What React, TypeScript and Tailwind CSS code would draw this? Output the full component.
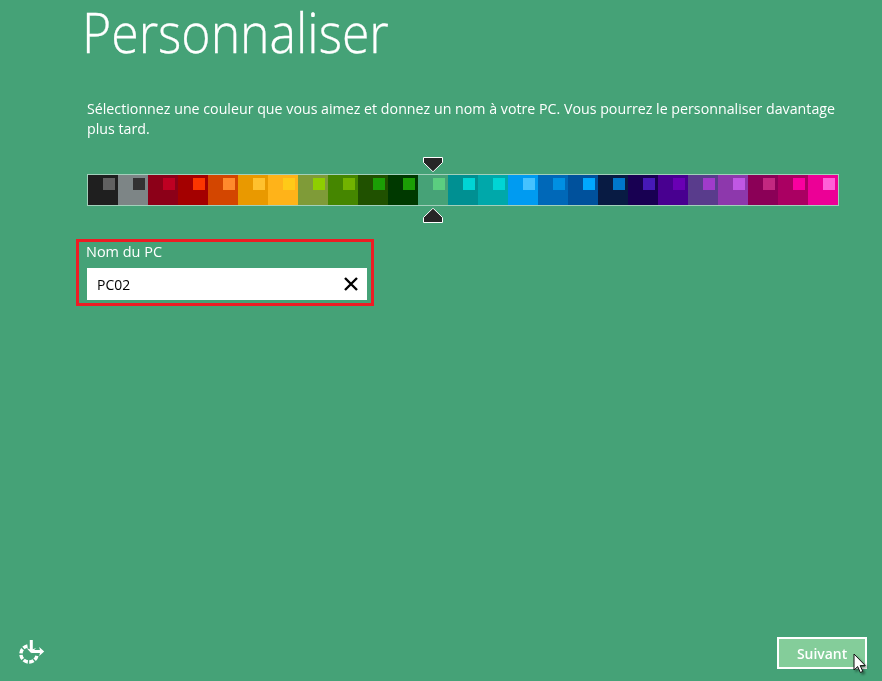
const swatches: [string, string][] = [
  ['#1f1f1f', '#616161'],
  ['#7d8586', '#323232'],
  ['#8c0018', '#be0022'],
  ['#a40000', '#fb3600'],
  ['#d34600', '#ff8a2c'],
  ['#e99900', '#ffc12e'],
  ['#ffb319', '#ffca18'],
  ['#7f9b38', '#8fce00'],
  ['#458600', '#72b300'],
  ['#205100', '#1b9e05'],
  ['#003900', '#1b9e05'],
  ['#46a277', '#5bce80'],
  ['#009092', '#00d5d5'],
  ['#00a8aa', '#00d5d5'],
  ['#009bf1', '#45c2ff'],
  ['#0068b8', '#0090e3'],
  ['#00519c', '#00a8ff'],
  ['#081b43', '#0077cb'],
  ['#180052', '#4619b8'],
  ['#480090', '#6900b4'],
  ['#593c8c', '#a13bcb'],
  ['#8d38ac', '#c058e4'],
  ['#8b0057', '#c32880'],
  ['#aa0062', '#fa009f'],
  ['#ec0096', '#ff60d7'],
];

function Marker({ up = false }: { up?: boolean }) {
  return (
    <svg className={up ? 'block rotate-180' : 'block'} width="20" height="15" viewBox="0 0 20 15">
      <path d="M.5 .5H19.5V5.5L10.5 14.3H9.5L.5 5.5Z" fill="#262626" stroke="#fff" />
    </svg>
  );
}

export default function App() {
  return (
    <main className="flex h-[681px] w-[882px] flex-col bg-[#45a277] font-['Open_Sans','Noto_Sans',sans-serif] text-white">
      <h1 className="mb-[22px] ml-[82px] h-[76px] w-max origin-left scale-x-[0.908] text-[55px] leading-[64px] font-light whitespace-nowrap [-webkit-text-stroke:0.3px_white]">
        Personnaliser
      </h1>
      <p className="ml-[87px] h-[59px] w-max origin-left scale-x-[0.948] text-[15px] leading-5 whitespace-nowrap">
        Sélectionnez une couleur que vous aimez et donnez un nom à votre PC. Vous pourrez le personnaliser davantage
        <br />
        plus tard.
      </p>
      <section className="ml-[87px] flex w-[752px] flex-col">
        <div className="ml-[336px] h-[17px]">
          <Marker />
        </div>
        <div className="flex border border-[#a2d0bb]">
          {swatches.map(([base, accent], i) => (
            <div key={i} className="h-[30px] w-[30px] pt-[3px] pl-[15px]" style={{ backgroundColor: base }}>
              <div className="h-3 w-3" style={{ backgroundColor: accent }} />
            </div>
          ))}
        </div>
        <div className="mt-[2px] ml-[336px]">
          <Marker up />
        </div>
      </section>
      <section className="mt-4 ml-[76px] h-[67px] w-[298px] border-3 border-[#ed1c24] pl-2">
        <label className="-mt-px -ml-px block h-[27px] w-max origin-left scale-x-[0.965] text-[15px] leading-5">Nom du PC</label>
        <div className="flex h-8 w-[280px] items-center justify-between bg-white pr-[9px] pl-[10px] text-black">
          <span className="origin-left scale-x-[0.93] text-[15px] leading-5">PC02</span>
          <svg width="14" height="14" viewBox="0 0 14 14" fill="none" stroke="#000" strokeWidth="2.4">
            <path d="M1 1L13 13M13 1L1 13" />
          </svg>
        </div>
      </section>
      <footer className="mt-auto flex h-[44px] items-start justify-between pr-[15px] pl-[18px]">
        <svg className="mt-[2px]" width="28" height="26" viewBox="0 0 28 26" fill="none" stroke="#fff">
          <path d="M9.5 7A8.1 8.1 0 1 0 19 16.3" strokeWidth="3.4" strokeDasharray="4.6 1.4" />
          <path d="M13.3 1V11M14 12.5H23" strokeWidth="3" />
          <path d="M8.5 9L11.8 10.2H14.8L18 9L13.3 14.3ZM21.2 8L26.2 12.5L21.2 17L22.3 12.5Z" fill="#fff" stroke="none" />
        </svg>
        <button className="relative h-8 w-[90px] border-2 border-white bg-[#84cd9a] text-[15px] leading-[28px] font-semibold">
          <span className="inline-block scale-x-[0.93]">Suivant</span>
          <svg className="absolute top-[14px] left-[74px] drop-shadow-[2px_2px_1px_rgba(0,0,0,0.4)]" width="14" height="21" viewBox="0 0 14 21">
            <path d="M1 1V17L4.7 13.6L7.3 19.5L9.8 18.4L7.2 12.6H12.3Z" fill="#fff" stroke="#111" />
          </svg>
        </button>
      </footer>
    </main>
  );
}
